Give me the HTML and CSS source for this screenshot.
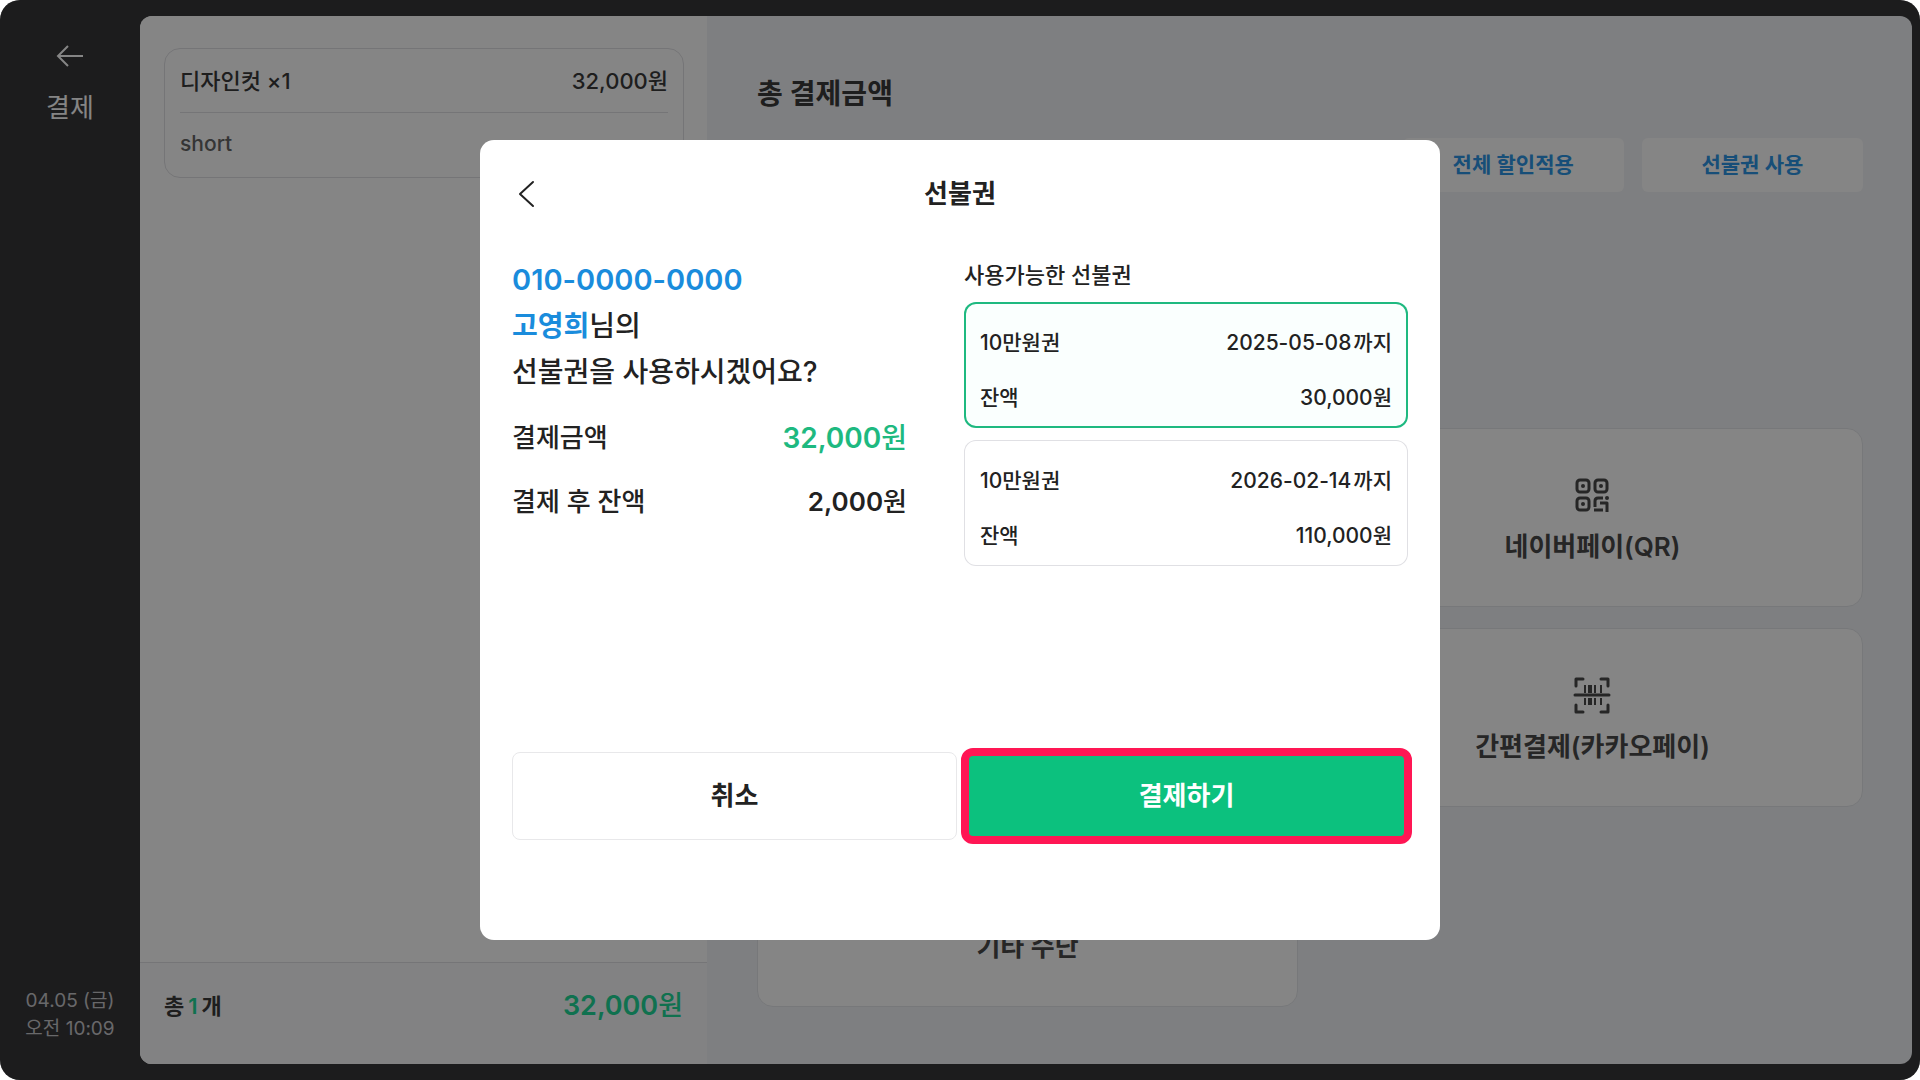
FILE: index.html
```html
<!DOCTYPE html>
<html lang="ko">
<head>
  <meta charset="UTF-8">
  <meta name="viewport" content="width=device-width, initial-scale=1.0">
  <title>선불권</title>
  <link rel="stylesheet" href="styles.css">
</head>

<body>
  <div class="app">
    <nav class="sidebar">
      <a href="#" class="sidebar-back">
        <svg width="28" height="24" viewBox="0 0 28 24" fill="none" stroke="currentColor" stroke-width="2"><path d="M27 12H2M12 2L2 12l10 10"/></svg>
        <span>결제</span>
      </a>
      <div class="clock">
        <div>04.05 (금)</div>
        <div>오전 10:09</div>
      </div>
    </nav>

    <main class="screen">
      <section class="order">
        <div class="order-list">
          <div class="order-item">
            <div class="order-row">
              <span>디자인컷 ×1</span>
              <span>32,000원</span>
            </div>
            <div class="order-row order-option">short</div>
          </div>
        </div>
        <div class="order-total">
          <span class="order-count">총<b>1</b>개</span>
          <span class="order-sum">32,000<span class="unit">원</span></span>
        </div>
      </section>

      <section class="payment">
        <h1>총 결제금액</h1>
        <div class="actions">
          <button class="action">전체 할인적용</button>
          <button class="action">선불권 사용</button>
        </div>
        <div class="methods">
          <button class="method method-naver">
            <svg width="40" height="40" viewBox="0 0 40 40" fill="none" stroke="currentColor" stroke-width="3">
              <rect x="4" y="4" width="12" height="12" rx="3"/>
              <rect x="22" y="4" width="12" height="12" rx="3"/>
              <rect x="4" y="22" width="12" height="12" rx="3"/>
              <g fill="currentColor" stroke="none">
                <circle cx="10" cy="10" r="2"/>
                <circle cx="28" cy="10" r="2"/>
                <circle cx="10" cy="28" r="2"/>
                <circle cx="34" cy="22" r="2"/>
              </g>
              <path d="M30 22h-5q-3 0-3 3v6M27 27h7v9M21 34h9" stroke-linejoin="round"/>
            </svg>
            <span>네이버페이(QR)</span>
          </button>
          <button class="method method-kakao">
            <svg width="40" height="40" viewBox="0 0 40 40" fill="none" stroke="currentColor" stroke-width="3" stroke-linecap="round" stroke-linejoin="round">
              <path d="M3 10V3h7M28 3h7v7M3 29v7h7M28 36h7v-7M2 19h34"/>
              <path d="M12 9v8M22 9v8M28 9v8M12 22v7M22 22v7M28 22v7" stroke-width="2" stroke-linecap="butt"/>
              <path d="M17 9v8M17 22v7" stroke-width="4" stroke-linecap="butt"/>
            </svg>
            <span>간편결제(카카오페이)</span>
          </button>
          <button class="method method-etc">
            <svg width="40" height="40" viewBox="0 0 40 40" fill="currentColor">
              <circle cx="8" cy="20" r="3"/>
              <circle cx="20" cy="20" r="3"/>
              <circle cx="32" cy="20" r="3"/>
            </svg>
            <span>기타 수단</span>
          </button>
        </div>
      </section>
    </main>

    <div class="backdrop">
      <section class="modal" role="dialog" aria-labelledby="modal-title">
        <header class="modal-header">
          <button class="modal-back">
            <svg width="28" height="32" viewBox="0 0 28 32" fill="none" stroke="currentColor" stroke-width="2" stroke-linecap="round" stroke-linejoin="round"><path d="M21 4L8 16l13 12"/></svg>
          </button>
          <h2 id="modal-title">선불권</h2>
        </header>

        <div class="modal-body">
          <div class="summary">
            <p class="question">
              <strong class="phone">010-0000-0000</strong><br>
              <strong>고영희</strong>님의<br>
              선불권을 사용하시겠어요?
            </p>
            <div class="summary-row">
              <span>결제금액</span>
              <strong class="price">32,000<span class="unit">원</span></strong>
            </div>
            <div class="summary-row">
              <span>결제 후 잔액</span>
              <strong>2,000<span class="unit">원</span></strong>
            </div>
          </div>

          <div class="vouchers">
            <h3>사용가능한 선불권</h3>
            <label class="voucher">
              <input type="radio" name="voucher" checked>
              <span class="voucher-row"><span>10만원권</span><span><span class="date">2025-05-08</span>까지</span></span>
              <span class="voucher-row"><span>잔액</span><span>30,000원</span></span>
            </label>
            <label class="voucher">
              <input type="radio" name="voucher">
              <span class="voucher-row"><span>10만원권</span><span><span class="date">2026-02-14</span>까지</span></span>
              <span class="voucher-row"><span>잔액</span><span>110,000원</span></span>
            </label>
          </div>
        </div>

        <footer class="modal-footer">
          <button class="btn">취소</button>
          <button class="btn btn-pay">결제하기</button>
        </footer>
      </section>
    </div>
  </div>
</body>
</html>
```
FILE: styles.css
```css
* {
  box-sizing: border-box;
}

body {
  margin: 0;
  background-color: #fff;
  color: #222;
  font-family: Inter, "Noto Sans CJK KR", sans-serif;
  line-height: 36px;
}

h1, h2, h3, p {
  margin: 0;
}

button {
  border: 0;
  padding: 0;
  background: none;
  color: inherit;
  font-family: inherit;
  line-height: inherit;
  cursor: pointer;
}

.unit {
  font-weight: 500;
}

.app {
  position: relative;
  display: flex;
  min-height: 100vh;
  padding: 16px 8px 16px 0;
  border-radius: 20px;
  background-color: #363638;
  overflow: hidden;
}

/* sidebar */
.sidebar {
  flex: 0 0 140px;
  display: flex;
  flex-direction: column;
  justify-content: space-between;
  align-items: center;
  padding: 28px 0 21px;
}

.sidebar-back {
  display: flex;
  flex-direction: column;
  align-items: center;
  gap: 22px;
  color: #fff;
  font-size: 26px;
  text-decoration: none;
}

.clock {
  color: #c8c8cc;
  font-size: 19px;
  line-height: 28px;
  text-align: center;
}

/* order */
.screen {
  flex: 1;
  display: flex;
  border-radius: 12px;
  background-color: #f2f4f7;
  overflow: hidden;
}

.order {
  flex: 0 0 32%;
  display: flex;
  flex-direction: column;
  background-color: #fff;
  color: #3a3a3a;
}

.order-list {
  flex: 1;
  padding: 32px 23px 32px 24px;
}

.order-item {
  padding: 0 15px 2px;
  border: 1px solid #e0e0e4;
  border-radius: 16px;
}

.order-row {
  display: flex;
  justify-content: space-between;
  align-items: center;
  height: 63px;
  font-size: 22px;
  font-weight: 500;
}

.order-option {
  border-top: 1px solid #e0e0e4;
  color: #666;
  font-size: 21px;
}

.order-total {
  display: flex;
  justify-content: space-between;
  padding: 25px 24px 40px;
  border-top: 1px solid #e0e0e4;
  background-color: #fafafc;
  font-weight: 600;
}

.order-count {
  font-size: 22px;
}

.order-count b {
  padding: 0 4px;
  color: #20d898;
  font-weight: 600;
}

.order-sum {
  color: #20d898;
  font-size: 27px;
}

/* payment */
.payment {
  flex: 1;
  display: flex;
  flex-direction: column;
  padding: 58px 49px 57px 50px;
  color: #3a3a3a;
}

.payment h1 {
  font-size: 28px;
  font-weight: 600;
  line-height: 40px;
}

.actions {
  display: flex;
  justify-content: flex-end;
  gap: 18px;
  margin-top: 24px;
}

.action {
  width: 20%;
  height: 54px;
  border-radius: 6px;
  background-color: #fff;
  color: #2c96e6;
  font-size: 21px;
  font-weight: 600;
}

.methods {
  display: grid;
  grid-template-columns: 1fr 1fr;
  grid-auto-rows: 179px;
  gap: 21px 24px;
  margin-top: auto;
}

.method {
  display: flex;
  flex-direction: column;
  justify-content: center;
  align-items: center;
  gap: 13px;
  padding-top: 5px;
  border: 1px solid #e4e6ea;
  border-radius: 16px;
  background-color: #fff;
  color: #4a4a4a;
  font-size: 26px;
  font-weight: 600;
}

.method-naver {
  grid-area: 1 / 2;
}

.method-kakao {
  grid-area: 2 / 2;
}

.method-etc {
  grid-area: 3 / 1;
}

/* modal */
.backdrop {
  position: absolute;
  inset: 0;
  display: flex;
  justify-content: center;
  align-items: center;
  background-color: rgba(0, 0, 0, 0.48);
}

.modal {
  display: flex;
  flex-direction: column;
  width: 50%;
  min-height: 800px;
  padding: 32px 32px 100px;
  border-radius: 14px;
  background-color: #fff;
}

.modal-header {
  display: grid;
  grid-template-columns: 28px 1fr 28px;
  align-items: center;
  height: 44px;
  text-align: center;
}

.modal-back {
  height: 32px;
  line-height: 0;
}

.modal-header h2 {
  font-size: 26px;
  font-weight: 600;
}

.modal-body {
  flex: 1;
  display: grid;
  grid-template-columns: 1fr 1fr;
  gap: 8px;
  margin-top: 41px;
}

.summary {
  padding-right: 49px;
}

.question {
  margin-bottom: 11px;
  font-size: 28px;
  font-weight: 500;
  line-height: 46px;
}

.question strong {
  color: #1a8cdc;
  font-weight: 600;
}

.question .phone {
  font-size: 29px;
}

.summary-row {
  display: flex;
  justify-content: space-between;
  align-items: center;
  height: 64px;
  font-size: 26px;
  font-weight: 500;
}

.summary-row strong {
  font-weight: 600;
}

.summary-row .price {
  color: #1eb980;
  font-size: 28px;
}

.vouchers h3 {
  margin-bottom: 8px;
  font-size: 22px;
  font-weight: 500;
  line-height: 37px;
}

.voucher {
  display: flex;
  flex-direction: column;
  gap: 27px;
  margin-bottom: 12px;
  padding: 27px 16px 16px;
  border-radius: 12px;
  box-shadow: inset 0 0 0 1px #e0e0e4;
  font-size: 21px;
  font-weight: 500;
  line-height: 28px;
  cursor: pointer;
}

.voucher:has(input:checked) {
  background-color: #fafffe;
  box-shadow: inset 0 0 0 2px #1eb980;
}

.voucher input {
  position: absolute;
  appearance: none;
  margin: 0;
}

.voucher-row {
  display: flex;
  justify-content: space-between;
}

.date {
  margin-right: 2px;
}

.modal-footer {
  display: flex;
  gap: 8px;
}

.btn {
  flex: 1;
  height: 88px;
  border: 1px solid #e8e8ea;
  border-radius: 8px;
  font-size: 26px;
  font-weight: 600;
}

.btn-pay {
  border: 0;
  outline: 8px solid #ff1654;
  outline-offset: -4px;
  background-color: #0cc17e;
  color: #fff;
}
```
